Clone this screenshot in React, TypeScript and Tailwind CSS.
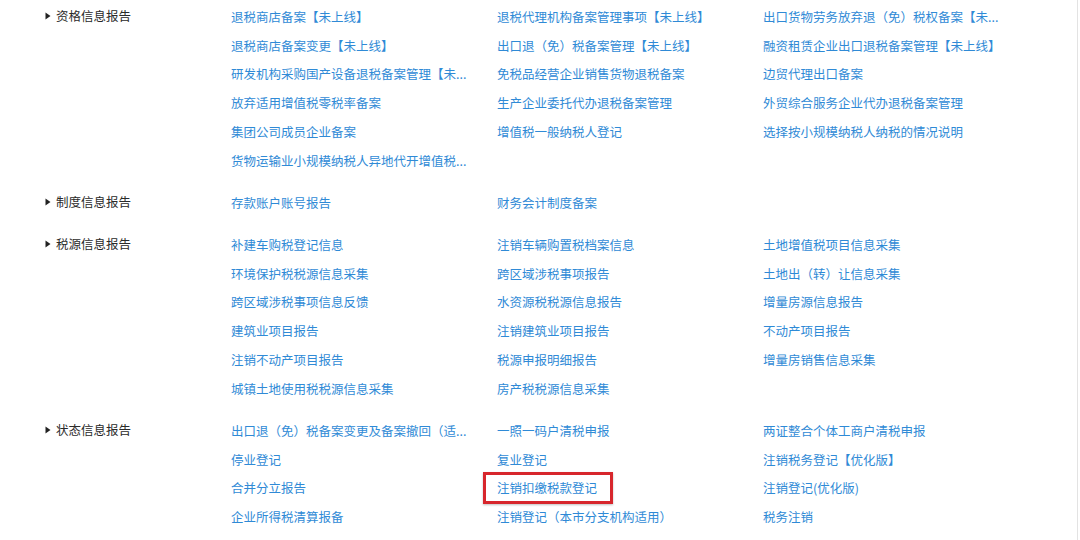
import React from "react";

type Section = {
  title: string;
  rows: string[][];
};

const sections: Section[] = [
  {
    title: "资格信息报告",
    rows: [
      ["退税商店备案【未上线】", "退税代理机构备案管理事项【未上线】", "出口货物劳务放弃退（免）税权备案【未..."],
      ["退税商店备案变更【未上线】", "出口退（免）税备案管理【未上线】", "融资租赁企业出口退税备案管理【未上线】"],
      ["研发机构采购国产设备退税备案管理【未...", "免税品经营企业销售货物退税备案", "边贸代理出口备案"],
      ["放弃适用增值税零税率备案", "生产企业委托代办退税备案管理", "外贸综合服务企业代办退税备案管理"],
      ["集团公司成员企业备案", "增值税一般纳税人登记", "选择按小规模纳税人纳税的情况说明"],
      ["货物运输业小规模纳税人异地代开增值税...", "", ""],
    ],
  },
  {
    title: "制度信息报告",
    rows: [["存款账户账号报告", "财务会计制度备案", ""]],
  },
  {
    title: "税源信息报告",
    rows: [
      ["补建车购税登记信息", "注销车辆购置税档案信息", "土地增值税项目信息采集"],
      ["环境保护税税源信息采集", "跨区域涉税事项报告", "土地出（转）让信息采集"],
      ["跨区域涉税事项信息反馈", "水资源税税源信息报告", "增量房源信息报告"],
      ["建筑业项目报告", "注销建筑业项目报告", "不动产项目报告"],
      ["注销不动产项目报告", "税源申报明细报告", "增量房销售信息采集"],
      ["城镇土地使用税税源信息采集", "房产税税源信息采集", ""],
    ],
  },
  {
    title: "状态信息报告",
    rows: [
      ["出口退（免）税备案变更及备案撤回（适...", "一照一码户清税申报", "两证整合个体工商户清税申报"],
      ["停业登记", "复业登记", "注销税务登记【优化版】"],
      ["合并分立报告", "注销扣缴税款登记", "注销登记(优化版)"],
      ["企业所得税清算报备", "注销登记（本市分支机构适用）", "税务注销"],
    ],
  },
];

const HIGHLIGHT = "注销扣缴税款登记";

function Arrow() {
  return (
    <svg width="6" height="8" viewBox="0 0 6 8" className="shrink-0">
      <path d="M0.5 0.5 L5.5 4 L0.5 7.5 Z" fill="#222" />
    </svg>
  );
}

export default function App() {
  return (
    <div
      className="w-[1080px] h-[540px] overflow-hidden bg-white flex [text-spacing-trim:space-all]"
      style={{ fontFamily: '"Microsoft YaHei", "Noto Sans CJK SC", "Noto Sans", sans-serif' }}
    >
      <div className="flex-1 pl-[45px] pt-[2px]">
        {sections.map((s) => (
          <div key={s.title} className="flex mb-[13.2px]">
            <div className="w-[186px] h-[28.8px] flex items-center gap-[5px] text-[12.5px] text-[#2a2a2a]">
              <Arrow />
              <span>{s.title}</span>
            </div>
            <div className="flex flex-col">
              {s.rows.map((r, i) => (
                <div key={i} className="flex h-[28.8px] items-center">
                  {r.map((t, j) => (
                    <div key={j} className="w-[266px] relative text-[12.5px] leading-[17px] text-[#2f8ad6] whitespace-nowrap">
                      {t}
                      {t === HIGHLIGHT && (
                        <div className="absolute left-[-14px] top-[-7px] w-[130px] h-[32px] border-[3px] border-[#d7262c] shadow-[0_1px_2px_rgba(0,0,0,0.25)]" />
                      )}
                    </div>
                  ))}
                </div>
              ))}
            </div>
          </div>
        ))}
      </div>
      <div className="w-[3px] h-full border-l border-[#e3e3e3]" />
    </div>
  );
}
